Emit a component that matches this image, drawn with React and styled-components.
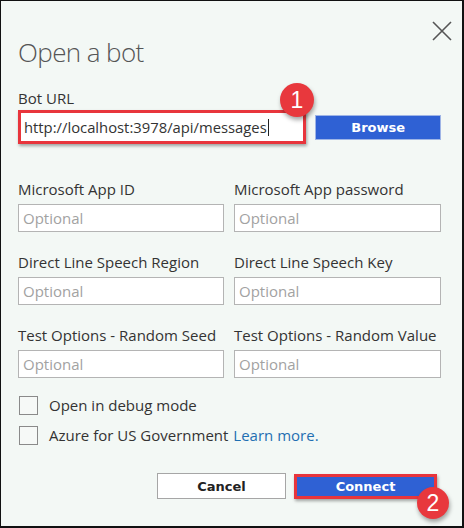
import React from "react";
import styled, { createGlobalStyle } from "styled-components";

const Global = createGlobalStyle`
  html, body { margin: 0; padding: 0; background: #f3f8f5; }
  * { box-sizing: border-box; }
`;

const Dialog = styled.div`
  position: relative;
  width: 464px;
  height: 528px;
  background: #f3f8f5;
  border-style: solid;
  border-color: #111;
  border-width: 1px 2px 2px 1px;
  padding: 19px 21px 0 17px;
  font-family: "Open Sans", "Liberation Sans", sans-serif;
  color: #333;
`;

const Header = styled.div`
  display: flex;
  justify-content: space-between;
  align-items: flex-start;
`;

const Title = styled.h1`
  margin: 14px 0 0 0;
  font-weight: 300;
  font-size: 26px;
  line-height: 36px;
  color: #555;
  letter-spacing: -0.6px;
`;

const Close = styled.button`
  width: 22px;
  height: 22px;
  margin-right: -12px;
  padding: 0;
  border: 0;
  background: transparent;
  display: flex;
  align-items: center;
  justify-content: center;
`;

const Label = styled.label`
  display: block;
  font-size: 15px;
  line-height: 19px;
  color: #333;
  margin-bottom: ${(p) => p.$gap ?? 5}px;
  white-space: nowrap;
`;

const UrlSection = styled.div`
  margin-top: 19px;
`;

const UrlRow = styled.div`
  display: flex;
  align-items: center;
`;

const UrlWrap = styled.div`
  position: relative;
  width: 289px;
  height: 34px;
`;

const UrlInput = styled.div`
  width: 100%;
  height: 100%;
  background: #fff;
  border: 3px solid #e8353c;
  box-shadow: 1px 2px 3px rgba(0, 0, 0, 0.35);
  display: flex;
  align-items: center;
  padding-left: 3px;
  font-size: 14.8px;
  color: #333;
  white-space: nowrap;
`;

const Caret = styled.span`
  display: inline-block;
  width: 1px;
  height: 17px;
  background: #222;
  margin-left: 1px;
`;

const Badge = styled.div`
  position: absolute;
  left: ${(p) => p.$x}px;
  top: ${(p) => p.$y}px;
  width: ${(p) => p.$size}px;
  height: ${(p) => p.$size}px;
  border-radius: 50%;
  background: #e8383d;
  color: #fff;
  font-family: "Liberation Sans", Arial, sans-serif;
  font-size: 23px;
  display: flex;
  align-items: center;
  justify-content: center;
  box-shadow: 1px 3px 4px rgba(0, 0, 0, 0.35);
  z-index: 2;
`;

const BlueButton = styled.button`
  width: ${(p) => p.$w}px;
  height: ${(p) => p.$h}px;
  margin-left: ${(p) => p.$ml ?? 0}px;
  background: #2f61d4;
  border: ${(p) => (p.$highlight ? "3px solid #e8353c" : "1px solid #9fb5e6")};
  box-shadow: ${(p) => (p.$highlight ? "1px 2px 3px rgba(0,0,0,0.35)" : "none")};
  color: #fff;
  font-family: "DejaVu Sans", Verdana, sans-serif;
  font-weight: bold;
  font-size: 13px;
  padding: 0;
`;

const Grid = styled.div`
  margin-top: 36px;
  display: grid;
  grid-template-columns: 206px 207px;
  column-gap: 10px;
  row-gap: 21px;
`;

const Field = styled.div`
  display: flex;
  flex-direction: column;
`;

const TextInput = styled.div`
  height: 28px;
  background: #fff;
  border: 1px solid #b4b4b4;
  display: flex;
  align-items: center;
  padding-left: 4px;
  font-size: 15px;
  color: #a2a2a2;
`;

const Checks = styled.div`
  margin-top: 18px;
  display: flex;
  flex-direction: column;
  gap: 11px;
`;

const CheckRow = styled.div`
  display: flex;
  align-items: center;
  font-size: 15px;
  color: #333;
  line-height: 19px;
`;

const Box = styled.span`
  width: 19px;
  height: 19px;
  border: 1px solid #8a8a8a;
  margin-left: 1px;
  margin-right: 11px;
  background: #f6f9f7;
`;

const Link = styled.a`
  color: #1f6fb2;
  margin-left: 5px;
  text-decoration: none;
`;

const Footer = styled.div`
  margin-top: 28px;
  display: flex;
  justify-content: flex-end;
  gap: 8px;
  padding-right: 4px;
`;

const CancelButton = styled.button`
  width: 129px;
  height: 26px;
  background: #fff;
  border: 1px solid #a6a6a6;
  color: #222;
  font-family: "DejaVu Sans", Verdana, sans-serif;
  font-weight: bold;
  font-size: 13px;
  padding: 0;
`;

const ConnectWrap = styled.div`
  position: relative;
  margin-top: 1px;
`;

const fields = [
  ["Microsoft App ID", "Microsoft App password"],
  ["Direct Line Speech Region", "Direct Line Speech Key"],
  ["Test Options - Random Seed", "Test Options - Random Value"],
];

export default function App() {
  return (
    <>
      <Global />
      <Dialog>
        <Header>
          <Title>Open a bot</Title>
          <Close aria-label="Close">
            <svg width="20" height="20" viewBox="0 0 20 20">
              <path d="M1 1 L19 19 M19 1 L1 19" stroke="#555" strokeWidth="1.6" fill="none" />
            </svg>
          </Close>
        </Header>
        <UrlSection>
          <Label $gap={2}>Bot URL</Label>
          <UrlRow>
            <UrlWrap>
              <UrlInput>
                http://localhost:3978/api/messages
                <Caret />
              </UrlInput>
              <Badge $x={262} $y={-27} $size={34}>1</Badge>
            </UrlWrap>
            <BlueButton $w={126} $h={25} $ml={9}>Browse</BlueButton>
          </UrlRow>
        </UrlSection>
        <Grid>
          {fields.flat().map((f) => (
            <Field key={f}>
              <Label>{f}</Label>
              <TextInput>Optional</TextInput>
            </Field>
          ))}
        </Grid>
        <Checks>
          <CheckRow>
            <Box />
            Open in debug mode
          </CheckRow>
          <CheckRow>
            <Box />
            Azure for US Government<Link href="#">Learn more.</Link>
          </CheckRow>
        </Checks>
        <Footer>
          <CancelButton>Cancel</CancelButton>
          <ConnectWrap>
            <BlueButton $w={143} $h={25} $highlight>Connect</BlueButton>
            <Badge $x={123} $y={13} $size={32}>2</Badge>
          </ConnectWrap>
        </Footer>
      </Dialog>
    </>
  );
}
